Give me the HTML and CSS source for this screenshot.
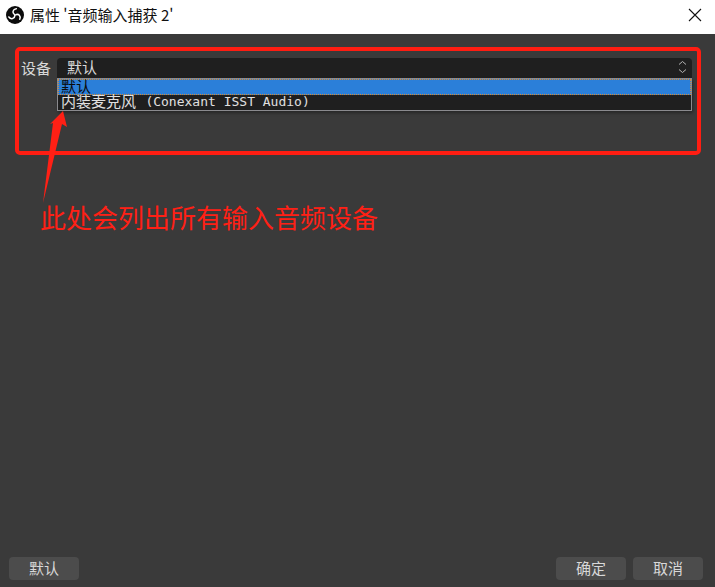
FILE: index.html
```html
<!DOCTYPE html>
<html lang="zh">
<head>
<meta charset="utf-8">
<title>属性</title>
<link rel="stylesheet" href="styles.css">
</head>
<body>
<div class="window">
  <header class="titlebar">
    <svg class="logo" viewBox="0 0 20 20" width="18" height="18">
      <circle cx="10" cy="10" r="10" fill="#0c0c0c"/>
      <g fill="none" stroke="#fff" stroke-width="1.700" stroke-linecap="round">
        <path d="M9.500 9.500C6.500 7.500 7.500 3.500 11.500 3"/>
        <path d="M9.500 9.500C6.500 7.500 7.500 3.500 11.500 3" transform="rotate(120 10 10)"/>
        <path d="M9.500 9.500C6.500 7.500 7.500 3.500 11.500 3" transform="rotate(240 10 10)"/>
      </g>
    </svg>
    <span class="title">属性 '音频输入捕获 2'</span>
    <svg class="close" viewBox="0 0 14 14" width="14" height="14">
      <path d="M1 1l12 12M13 1L1 13" stroke="#111" stroke-width="1.100" fill="none"/>
    </svg>
  </header>
  <main class="content">
    <div class="form">
      <label class="label">设备</label>
      <div class="combo">
        <div class="combo-value">
          <span>默认</span>
          <svg class="spin" viewBox="0 0 9 14" width="9" height="14">
            <path d="M1 4.500L4.500 1.500L8 4.500M1 9.500L4.500 12.500L8 9.500" stroke="#b4b4b4" stroke-width="1" fill="none"/>
          </svg>
        </div>
        <ul class="popup">
          <li class="item item-active"><span>默认</span></li>
          <li class="item"><span class="cjk">内装麦克风 </span><span class="latin">(Conexant ISST Audio)</span></li>
        </ul>
      </div>
    </div>
    <footer class="footer">
      <button class="btn">默认</button>
      <div class="footer-right">
        <button class="btn">确定</button>
        <button class="btn">取消</button>
      </div>
    </footer>
  </main>
  <div class="red-frame"></div>
  <svg class="arrow" viewBox="0 0 715 587" width="715" height="587">
    <path d="M63 111L67 127L62 124L43 203L53 123L50 124Z" fill="#ff2015"/>
  </svg>
  <div class="note">此处会列出所有输入音频设备</div>
</div>
</body>
</html>
```
FILE: styles.css
```css
* { box-sizing: border-box; }
html, body { margin: 0; padding: 0; }
body {
  font-family: "Noto Sans CJK SC", "Liberation Sans", sans-serif;
  font-size: 15px;
  overflow: hidden;
}
.window {
  position: relative;
  width: 715px;
  height: 587px;
  display: flex;
  flex-direction: column;
  background: #3a3a3a;
}
.titlebar {
  height: 34px;
  flex: none;
  background: #fff;
  display: flex;
  align-items: center;
  padding: 0 13px 0 6px;
  color: #111;
}
.logo { flex: none; margin-right: 6px; margin-top: -4px; }
.title { flex: 1; font-size: 15px; line-height: 20px; margin-top: -4px; }
.close { flex: none; margin-top: -4px; }
.content {
  flex: 1;
  display: flex;
  flex-direction: column;
  justify-content: space-between;
  padding: 24px 12px 7px 9px;
}
.form { display: flex; align-items: flex-start; gap: 6px; padding-left: 12px; }
.label { color: #d8d8d8; font-size: 15px; line-height: 19px; }
.combo { width: 635px; }
.combo-value {
  height: 20px;
  background: #1f1f1f;
  border-radius: 4px 4px 0 0;
  color: #d8d8d8;
  display: flex;
  align-items: center;
  justify-content: space-between;
  padding: 0 5px 2px 10px;
  font-size: 15px;
  line-height: 18px;
}
.popup {
  list-style: none;
  margin: 0;
  padding: 0;
  height: 33px;
  background: #1f1f1f;
  border: 1px solid #8a8a8e;
  box-shadow: 1px 2px 3px rgba(0,0,0,.35);
}
.item {
  height: 15.500px;
  display: flex;
  align-items: center;
  padding: 0 0 1px 3px;
  color: #e0e0e0;
  font-size: 15px;
  line-height: 14px;
  white-space: pre;
}
.cjk { margin-bottom: 2px; }
.latin {
  font-family: "DejaVu Sans Mono", "Liberation Mono", monospace;
  font-size: 13px;
  margin-left: 6px;
}
.item-active {
  background: #2b7fd9;
  color: #0a0a0a;
  outline: 1px dotted #d98a30;
  outline-offset: -1px;
}
.footer { display: flex; justify-content: space-between; align-items: center; }
.footer-right { display: flex; gap: 7px; }
.btn {
  width: 70px;
  height: 23px;
  padding: 0 0 2px;
  border: 0;
  border-radius: 4px;
  background: #4c4c4c;
  color: #d8d8d8;
  font: 15px/21px "Noto Sans CJK SC", sans-serif;
}
.red-frame {
  position: absolute;
  left: 15px;
  top: 47px;
  width: 686px;
  height: 108px;
  border: 4px solid #ff1d12;
  border-radius: 5px;
}
.arrow { position: absolute; left: 0; top: 0; pointer-events: none; }
.note {
  position: absolute;
  left: 40px;
  top: 198px;
  color: #ff2015;
  font-size: 26px;
  line-height: 38px;
  white-space: nowrap;
}
```
